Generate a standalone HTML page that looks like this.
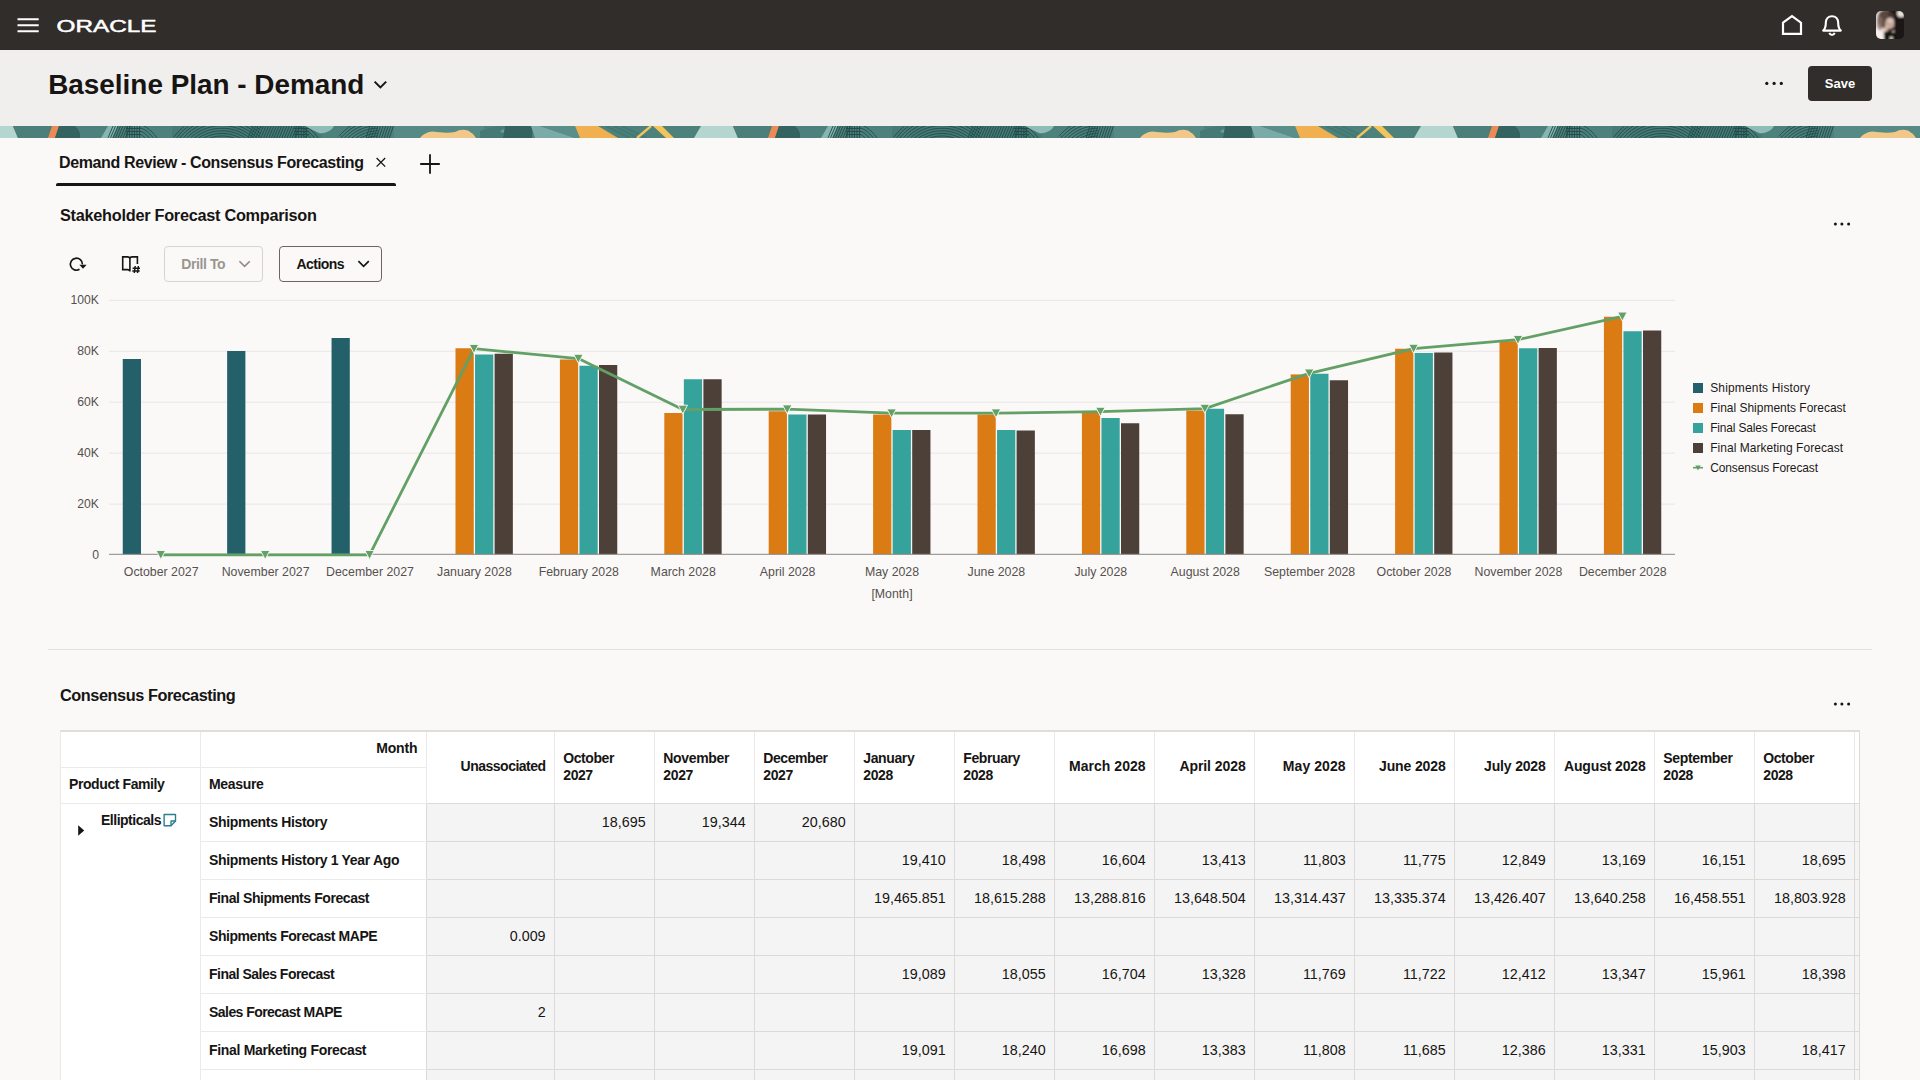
<!DOCTYPE html>
<html lang="en"><head><meta charset="utf-8"><title>Baseline Plan - Demand</title>
<style>
html,body{margin:0;padding:0}
body{width:1920px;height:1080px;overflow:hidden;position:relative;background:#fbf9f8;font-family:"Liberation Sans", Arial, sans-serif;color:#161513}
.abs{position:absolute}
.vl{position:absolute;width:1px}
.hl{position:absolute;height:1px}
.th{position:absolute;font-weight:700;font-size:14px;line-height:17px;white-space:nowrap;color:#161513}
.td{position:absolute;font-size:14.3px;line-height:17px;text-align:right;white-space:nowrap;color:#161513}
.btn{position:absolute;box-sizing:border-box;border-radius:4px;height:36px;top:246px}
</style></head><body>
<!-- top header -->
<div class="abs" style="left:0;top:0;width:1920px;height:50px;background:#312d2a">
<svg class="abs" style="left:17px;top:17px" width="23" height="16" viewBox="0 0 23 16"><path d="M0.5,2.3H21.7M0.5,8.3H21.7M0.5,14.2H21.7" stroke="#fff" stroke-width="1.9"/></svg>
<svg class="abs" style="left:54px;top:14px" width="106" height="24" viewBox="0 0 106 24"><text x="2.6" y="18.3" font-family='&quot;Liberation Sans&quot;, Arial, sans-serif' font-size="17.3" fill="#fff" stroke="#fff" stroke-width="0.5" textLength="100" lengthAdjust="spacingAndGlyphs">ORACLE</text></svg>
<svg class="abs" style="left:1780px;top:13px" width="24" height="24" viewBox="0 0 24 24"><path d="M3,9.7 L12,3.1 L21,9.7 V20.9 H3 Z" fill="none" stroke="#fff" stroke-width="2.2" stroke-linejoin="miter"/></svg>
<svg class="abs" style="left:1820px;top:13px" width="24" height="24" viewBox="0 0 24 24"><path d="M3.2,17.6 H20.8 C18.6,15.6 18.2,14 18.2,10 C18.2,5.8 15.6,3.2 12,3.2 C8.4,3.2 5.8,5.8 5.8,10 C5.8,14 5.4,15.6 3.2,17.6 Z" fill="none" stroke="#fff" stroke-width="2.1" stroke-linejoin="round"/><path d="M9.3,19.9 C9.9,21.5 10.9,22 12,22 C13.1,22 14.1,21.5 14.7,19.9" fill="none" stroke="#fff" stroke-width="2" stroke-linecap="butt"/></svg>
<svg class="abs" style="left:1876px;top:11px" width="28" height="28" viewBox="0 0 28 28"><defs><clipPath id="av"><rect x="0" y="0" width="28" height="28" rx="5"/></clipPath><filter id="bl" x="-20%" y="-20%" width="140%" height="140%"><feGaussianBlur stdDeviation="0.9"/></filter></defs><g clip-path="url(#av)"><rect width="28" height="28" fill="#1e1614"/><g filter="url(#bl)"><rect x="-2" y="-2" width="14" height="32" fill="#e6d8d3"/><ellipse cx="10" cy="8" rx="8.5" ry="9.5" fill="#4a3631" fill-opacity="0.9"/><ellipse cx="4" cy="12" rx="3" ry="7" fill="#8a736c" fill-opacity="0.75"/><path d="M-2,16 Q2,18 4,20 Q7,21 8.4,22 L8,30 L-2,30Z" fill="#f8efec"/><rect x="18" y="-2" width="12" height="32" fill="#1c1513"/><ellipse cx="25" cy="2.4" rx="4" ry="3.6" fill="#e6e2da"/><ellipse cx="13.8" cy="12.4" rx="4.6" ry="6.2" fill="#c7a89b"/><ellipse cx="14.6" cy="9.5" rx="3" ry="2.6" fill="#d8c2b8"/><ellipse cx="10.4" cy="17.4" rx="1.9" ry="3.6" fill="#d2b0a0"/><path d="M7.8,21.5 Q12,18.6 19,20.5 L22,30 L8,30Z" fill="#181311"/><ellipse cx="17.3" cy="20.4" rx="1.1" ry="1.2" fill="#d9cfc9"/><rect x="13.8" y="25.8" width="3" height="3" fill="#e9e0dc"/></g></g></svg>
</div>
<!-- title bar -->
<div class="abs" style="left:0;top:50px;width:1920px;height:76px;background:#f1efee">
<div class="abs" style="left:48.2px;top:18.6px;font-size:27.9px;font-weight:700;line-height:32px;white-space:nowrap;color:#161513">Baseline Plan - Demand</div>
<svg class="abs" style="left:372px;top:29px" width="17" height="12" viewBox="0 0 17 12"><path d="M2.6,2.6 L8.4,8.4 L14.2,2.6" fill="none" stroke="#161513" stroke-width="2"/></svg>
<svg class="abs" style="left:1762px;top:28px" width="24" height="10" viewBox="0 0 24 10"><circle cx="4.8" cy="5.4" r="1.6" fill="#161513"/><circle cx="12.1" cy="5.4" r="1.6" fill="#161513"/><circle cx="19.3" cy="5.4" r="1.6" fill="#161513"/></svg>
<div class="abs" style="left:1808px;top:16.3px;width:64px;height:35px;border-radius:4px;background:#312d2a;color:#fff;font-weight:700;font-size:13px;line-height:35px;text-align:center">Save</div>
</div>
<!-- decorative strip -->
<svg class="abs" style="left:0;top:126px" width="1920" height="12" viewBox="0 0 1920 12">
<g id="sp">
<rect x="0" y="0" width="720" height="12" fill="#4c817c"/>
<polygon points="0,0 13,0 18,12 0,12" fill="#b5d5d1"/>
<polygon points="13,0 52,0 48,12 18,12" fill="#4a7f7a"/>
<polygon points="52,0 59,0 55,12 48,12" fill="#ee8a55"/>
<path d="M59,0 L75,0 Q81,5 80,12 L55,12 Z" fill="#346360"/>
<polygon points="108,0 118,0 112,12 101,12" fill="#86b6b0"/><rect x="172" y="0" width="150" height="12" fill="#457a75"/>
<g fill="none" stroke="#214b48" stroke-width="0.95" stroke-opacity="0.95"><path d="M113.0,0 L108.0,12M115.5,0 L110.5,12M118.0,0 L113.0,12M120.5,0 L115.5,12M123.0,0 L118.0,12M125.5,0 L120.5,12M128.0,0 L123.0,12M130.5,0 L125.5,12"/><path d="M127.0,0 L127.0,12M129.5,0 L129.5,12M132.0,0 L132.0,12M134.5,0 L134.5,12M137.0,0 L137.0,12M139.5,0 L139.5,12M126.0,2.5 H141.0M126.0,5.5 H141.0M126.0,8.5 H141.0"/><path d="M140.9,12.2 L141.8,12.9M140.5,8.3 L141.6,9.0 L142.7,9.8 L143.7,10.6 L144.7,11.4 L145.7,12.3M140.7,5.1 L142.0,5.8 L143.2,6.5 L144.5,7.3 L145.6,8.2 L146.7,9.2 L147.8,10.2 L148.8,11.3 L149.8,12.4M140.6,1.7 L142.1,2.4 L143.5,3.2 L144.9,4.0 L146.2,4.9 L147.5,5.9 L148.7,7.0 L149.9,8.1 L151.0,9.3 L152.1,10.5 L153.1,11.8M143.4,-0.3 L145.0,0.6 L146.5,1.5 L148.0,2.5 L149.4,3.6 L150.8,4.7 L152.0,6.0 L153.3,7.2 L154.4,8.6 L155.5,10.0 L156.5,11.5 L157.4,13.0"/><path d="M209.1,12.4 L210.9,11.8 L212.7,11.2 L214.5,10.8 L216.4,10.4 L218.2,10.2 L220.1,10.0 L222.0,10.0 L223.9,10.0 L225.8,10.2 L227.6,10.4 L229.5,10.8 L231.3,11.2 L233.1,11.8 L234.9,12.4M202.7,12.6 L204.5,11.6 L206.3,10.7 L208.2,10.0 L210.1,9.3 L212.0,8.7 L214.0,8.2 L216.0,7.9 L218.0,7.6 L220.0,7.5 L222.0,7.4 L224.0,7.5 L226.0,7.6 L228.0,7.9 L230.0,8.2 L232.0,8.7 L233.9,9.3 L235.8,10.0 L237.7,10.7 L239.5,11.6 L241.3,12.6M197.8,12.7 L199.6,11.4 L201.4,10.3 L203.3,9.3 L205.2,8.4 L207.2,7.5 L209.3,6.8 L211.3,6.2 L213.4,5.7 L215.6,5.3 L217.7,5.0 L219.8,4.9 L222.0,4.8 L224.2,4.9 L226.3,5.0 L228.4,5.3 L230.6,5.7 L232.7,6.2 L234.7,6.8 L236.8,7.5 L238.8,8.4 L240.7,9.3 L242.6,10.3 L244.4,11.4 L246.2,12.7M194.4,12.0 L196.3,10.6 L198.1,9.3 L200.1,8.1 L202.1,7.0 L204.2,6.0 L206.3,5.1 L208.5,4.3 L210.7,3.7 L212.9,3.2 L215.1,2.7 L217.4,2.4 L219.7,2.3 L222.0,2.2 L224.3,2.3 L226.6,2.4 L228.9,2.7 L231.1,3.2 L233.3,3.7 L235.5,4.3 L237.7,5.1 L239.8,6.0 L241.9,7.0 L243.9,8.1 L245.9,9.3 L247.7,10.6 L249.6,12.0M191.0,11.5 L192.8,9.9 L194.7,8.5 L196.7,7.1 L198.8,5.8 L200.9,4.7 L203.1,3.6 L205.4,2.7 L207.7,1.9 L210.0,1.2 L212.4,0.6 L214.7,0.2 L217.1,-0.1 L219.6,-0.3 L222.0,-0.4 L224.4,-0.3 L226.9,-0.1 L229.3,0.2 L231.6,0.6 L234.0,1.2 L236.3,1.9 L238.6,2.7 L240.9,3.6 L243.1,4.7 L245.2,5.8 L247.3,7.1 L249.3,8.5 L251.2,9.9 L253.0,11.5M187.4,11.4 L189.2,9.6 L191.2,7.9 L193.2,6.4 L195.3,4.9 L197.5,3.6 L199.8,2.3 L202.1,1.2 L204.4,0.3 L206.9,-0.6M237.1,-0.6 L239.6,0.3 L241.9,1.2 L244.2,2.3 L246.5,3.6 L248.7,4.9 L250.8,6.4 L252.8,7.9 L254.8,9.6 L256.6,11.4M183.7,11.5 L185.5,9.5 L187.5,7.7 L189.5,5.9 L191.7,4.3 L193.9,2.7 L196.2,1.3 L198.6,0.0M245.4,0.0 L247.8,1.3 L250.1,2.7 L252.3,4.3 L254.5,5.9 L256.5,7.7 L258.5,9.5 L260.3,11.5M179.9,11.9 L181.7,9.7 L183.7,7.7 L185.7,5.7 L187.9,3.9 L190.1,2.2 L192.5,0.5 L194.9,-0.9M249.1,-0.9 L251.5,0.5 L253.9,2.2 L256.1,3.9 L258.3,5.7 L260.3,7.7M176.0,12.6 L177.9,10.3 L179.8,8.0 L181.8,5.8 L184.0,3.8 L186.3,1.9 L188.6,0.0M255.4,0.0 L257.7,1.9 L260.0,3.8M173.9,11.1 L175.8,8.6 L177.9,6.3 L180.0,4.0 L182.3,1.9 L184.6,-0.2M259.4,-0.2 L261.7,1.9"/><path d="M253.0,0 L248.0,12M255.6,0 L250.6,12M258.2,0 L253.2,12M260.8,0 L255.8,12M263.4,0 L258.4,12M266.0,0 L261.0,12M268.6,0 L263.6,12M271.2,0 L266.2,12M273.8,0 L268.8,12M276.4,0 L271.4,12M279.0,0 L274.0,12M281.6,0 L276.6,12M284.2,0 L279.2,12M286.8,0 L281.8,12M289.4,0 L284.4,12M292.0,0 L287.0,12M294.6,0 L289.6,12M297.2,0 L292.2,12M299.8,0 L294.8,12"/><path d="M296.0,0 L296.0,12M298.6,0 L298.6,12M301.2,0 L301.2,12M303.8,0 L303.8,12M306.4,0 L306.4,12M294.0,2.5 H309.0M294.0,5.5 H309.0M294.0,8.5 H309.0"/><path d="M300.7,11.4 L301.9,12.2M301.0,8.0 L302.3,8.8 L303.6,9.7 L304.9,10.7 L306.1,11.7 L307.2,12.8M301.0,4.6 L302.5,5.4 L304.0,6.3 L305.4,7.3 L306.8,8.4 L308.1,9.5 L309.3,10.7 L310.5,11.9M300.6,1.1 L302.3,1.9 L304.0,2.8 L305.6,3.8 L307.2,4.9 L308.7,6.0 L310.1,7.2 L311.5,8.5 L312.8,9.9 L314.0,11.3 L315.1,12.8M303.7,-0.7 L305.5,0.2 L307.2,1.3 L308.9,2.4 L310.5,3.7 L312.1,5.0 L313.6,6.4 L315.0,7.9 L316.3,9.5 L317.6,11.1 L318.7,12.8"/><path d="M365.0,12.8 L366.5,12.1 L368.1,11.6 L369.7,11.1 L371.3,10.7 L373.0,10.4 L374.7,10.2 L376.3,10.0 L378.0,10.0M359.2,13.0 L360.7,12.0 L362.3,11.2 L363.9,10.4 L365.6,9.7 L367.3,9.1 L369.0,8.6 L370.8,8.2 L372.6,7.8 L374.4,7.6 L376.2,7.4 L378.0,7.4M356.1,11.9 L357.7,10.8 L359.4,9.8 L361.1,8.9 L362.9,8.0 L364.7,7.3 L366.5,6.6 L368.4,6.1 L370.3,5.6 L372.2,5.3 L374.1,5.0 L376.1,4.9 L378.0,4.8M351.4,12.4 L353.0,11.1 L354.6,9.8 L356.3,8.6 L358.1,7.5 L359.9,6.5 L361.8,5.6 L363.7,4.8 L365.7,4.1 L367.7,3.6 L369.7,3.1 L371.8,2.7 L373.8,2.4 L375.9,2.3 L378.0,2.2M348.0,12.0 L349.6,10.5 L351.3,9.0 L353.1,7.7 L354.9,6.4 L356.8,5.3 L358.8,4.2 L360.8,3.3 L362.8,2.4 L364.9,1.7 L367.0,1.0 L369.2,0.5 L371.4,0.1 L373.6,-0.2 L375.8,-0.3 L378.0,-0.4M344.6,11.9 L346.2,10.2 L347.9,8.6 L349.7,7.0 L351.5,5.6 L353.5,4.3 L355.5,3.0 L357.6,1.9 L359.7,0.9 L361.9,-0.0 L364.1,-0.8M341.0,12.0 L342.6,10.1 L344.3,8.3 L346.1,6.6 L348.0,5.0 L350.0,3.5 L352.1,2.1 L354.2,0.8 L356.4,-0.4M339.0,10.4 L340.7,8.4 L342.5,6.5 L344.4,4.7 L346.4,3.0 L348.5,1.4 L350.7,-0.1"/><path d="M370.0,0 L366.0,12M372.6,0 L368.6,12M375.2,0 L371.2,12M377.8,0 L373.8,12M380.4,0 L376.4,12M383.0,0 L379.0,12M385.6,0 L381.6,12M388.2,0 L384.2,12M390.8,0 L386.8,12M393.4,0 L389.4,12"/></g>
<path d="M305,0 L334,0 Q331,6.5 320,7.5 Q314,5 305,0Z" fill="#8fbcb6"/><rect x="394" y="0" width="90" height="12" fill="#568a85"/>
<path d="M420,12 Q424,6.5 432,5.5 Q446,7.5 455,6 Q461,2.5 468,4.5 Q473,7 476,12Z" fill="#f1c88a"/>
<path d="M480,5 L498,0 L505,0 L503,12 L480,12Z" fill="#457a75"/>
<path d="M500,6 Q504,1 512,2 L508,8 Z" fill="#6a9d98"/>
<polygon points="505,0 533,0 532,12 503,12" fill="#346360"/>
<polygon points="531,0 540,0 575,12 535,12" fill="#7aaba6"/>
<polygon points="540,0 575,0 580,12 575,12" fill="#5a8e89"/>
<polygon points="575,0 598,0 618,12 580,12" fill="#f0b050"/>
<g stroke="#437873" stroke-width="2"><path d="M606,0 L630,12M614,0 L638,12M622,0 L646,12"/></g>
<path d="M637,12 L651,0" stroke="#f3c45c" stroke-width="2.4" fill="none"/>
<path d="M653,0 L662,0 L674,12 L666,12 Z" fill="#f3c45c"/>
<polygon points="701,0 735,0 738,12 694,12" fill="#b5d5d1"/>
<polygon points="735,0 738,12 720,12 720,0" fill="#b5d5d1"/>
</g>
<use href="#sp" x="720"/><use href="#sp" x="1440"/></svg>
<!-- tabs -->
<div class="abs" style="left:59px;top:152.6px;font-size:16px;letter-spacing:-0.37px;font-weight:700;line-height:19px;white-space:nowrap">Demand Review - Consensus Forecasting</div>
<svg class="abs" style="left:374px;top:155px" width="14" height="14" viewBox="0 0 14 14"><path d="M2.6,3 L11.2,11.6 M11.2,3 L2.6,11.6" stroke="#161513" stroke-width="1.3"/></svg>
<svg class="abs" style="left:418px;top:152px" width="24" height="24" viewBox="0 0 24 24"><path d="M12,2.2V21.8M2.2,12H21.8" stroke="#161513" stroke-width="1.8"/></svg>
<div class="abs" style="left:56.3px;top:183px;width:339.3px;height:3.3px;background:#161513;border-radius:2px 2px 0 0"></div>
<!-- chart section -->
<div class="abs" style="left:60px;top:204.9px;font-size:16.3px;letter-spacing:-0.27px;font-weight:700;line-height:20px;white-space:nowrap">Stakeholder Forecast Comparison</div>
<svg class="abs" style="left:1830px;top:219px" width="24" height="10" viewBox="0 0 24 10"><circle cx="5.4" cy="5" r="1.5" fill="#161513"/><circle cx="11.9" cy="5" r="1.5" fill="#161513"/><circle cx="18.6" cy="5" r="1.5" fill="#161513"/></svg>
<svg class="abs" style="left:60px;top:245px" width="90" height="40" viewBox="60 245 90 40"><path d="M79.5,269.35 A6,6 0 1 1 82.4,264.4" fill="none" stroke="#161513" stroke-width="1.7"/><path d="M79.4,264.7 H86.6 L83,268.7 Z" fill="#161513"/><path d="M129.9,258.6 Q129.6,256.9 127.6,256.9 H122.7 V269.6 H127.6 Q129.6,269.6 129.9,271.4 M129.9,258.6 V271.6 M129.9,258.6 Q130.2,256.9 132.2,256.9 H137.4 V263.9" fill="none" stroke="#161513" stroke-width="1.6" stroke-linejoin="miter"/><path d="M135.2,266 L134.3,273 M138.4,266 L137.5,273 M132.6,268.3 H140 M132.3,270.9 H139.7" stroke="#161513" stroke-width="1.45" fill="none"/></svg>
<div class="btn" style="left:164.2px;width:99px;border:1px solid #d6d3d0"><span class="abs" style="left:16px;top:8.9px;font-size:14px;font-weight:700;letter-spacing:-0.4px;line-height:17px;color:#9a9692;white-space:nowrap">Drill To</span><svg class="abs" style="left:72px;top:11px" width="15" height="12" viewBox="0 0 15 12"><path d="M2.4,3.2 L7.6,8.4 L12.8,3.2" fill="none" stroke="#8f8b87" stroke-width="1.6"/></svg></div>
<div class="btn" style="left:279.2px;width:102.5px;border:1px solid #6b6661"><span class="abs" style="left:16.3px;top:8.9px;font-size:14px;font-weight:700;line-height:17px;white-space:nowrap;letter-spacing:-0.55px">Actions</span><svg class="abs" style="left:76px;top:11px" width="15" height="12" viewBox="0 0 15 12"><path d="M2.4,3.2 L7.6,8.4 L12.8,3.2" fill="none" stroke="#161513" stroke-width="1.7"/></svg></div>
<svg id="chart" width="1920" height="360" viewBox="0 280 1920 360" style="position:absolute;left:0;top:280px" font-family='&quot;Liberation Sans&quot;, Arial, sans-serif'>
<text x="99" y="559.05" text-anchor="end" font-size="12.2" fill="#55514e">0</text>
<line x1="109" x2="1675" y1="504.10" y2="504.10" stroke="#e8e6e4" stroke-width="1"/>
<text x="99" y="508.10" text-anchor="end" font-size="12.2" fill="#55514e">20K</text>
<line x1="109" x2="1675" y1="453.15" y2="453.15" stroke="#e8e6e4" stroke-width="1"/>
<text x="99" y="457.15" text-anchor="end" font-size="12.2" fill="#55514e">40K</text>
<line x1="109" x2="1675" y1="402.20" y2="402.20" stroke="#e8e6e4" stroke-width="1"/>
<text x="99" y="406.20" text-anchor="end" font-size="12.2" fill="#55514e">60K</text>
<line x1="109" x2="1675" y1="351.25" y2="351.25" stroke="#e8e6e4" stroke-width="1"/>
<text x="99" y="355.25" text-anchor="end" font-size="12.2" fill="#55514e">80K</text>
<line x1="109" x2="1675" y1="300.30" y2="300.30" stroke="#e8e6e4" stroke-width="1"/>
<text x="99" y="304.30" text-anchor="end" font-size="12.2" fill="#55514e">100K</text>
<rect x="122.75" y="359.00" width="18.25" height="195.30" fill="#23606a"/>
<rect x="227.15" y="351.00" width="18.25" height="203.30" fill="#23606a"/>
<rect x="331.55" y="338.00" width="18.25" height="216.30" fill="#23606a"/>
<rect x="455.50" y="348.25" width="18.25" height="206.05" fill="#db7b14"/>
<rect x="475.05" y="354.50" width="18.25" height="199.80" fill="#35a29c"/>
<rect x="494.60" y="353.75" width="18.25" height="200.55" fill="#4c4038"/>
<rect x="559.90" y="359.50" width="18.25" height="194.80" fill="#db7b14"/>
<rect x="579.45" y="365.75" width="18.25" height="188.55" fill="#35a29c"/>
<rect x="599.00" y="365.00" width="18.25" height="189.30" fill="#4c4038"/>
<rect x="664.30" y="413.00" width="18.25" height="141.30" fill="#db7b14"/>
<rect x="683.85" y="379.25" width="18.25" height="175.05" fill="#35a29c"/>
<rect x="703.40" y="379.25" width="18.25" height="175.05" fill="#4c4038"/>
<rect x="768.70" y="411.25" width="18.25" height="143.05" fill="#db7b14"/>
<rect x="788.25" y="414.50" width="18.25" height="139.80" fill="#35a29c"/>
<rect x="807.80" y="414.50" width="18.25" height="139.80" fill="#4c4038"/>
<rect x="873.10" y="414.50" width="18.25" height="139.80" fill="#db7b14"/>
<rect x="892.65" y="430.00" width="18.25" height="124.30" fill="#35a29c"/>
<rect x="912.20" y="430.00" width="18.25" height="124.30" fill="#4c4038"/>
<rect x="977.50" y="414.50" width="18.25" height="139.80" fill="#db7b14"/>
<rect x="997.05" y="430.00" width="18.25" height="124.30" fill="#35a29c"/>
<rect x="1016.60" y="430.50" width="18.25" height="123.80" fill="#4c4038"/>
<rect x="1081.90" y="413.00" width="18.25" height="141.30" fill="#db7b14"/>
<rect x="1101.45" y="418.00" width="18.25" height="136.30" fill="#35a29c"/>
<rect x="1121.00" y="423.25" width="18.25" height="131.05" fill="#4c4038"/>
<rect x="1186.30" y="410.50" width="18.25" height="143.80" fill="#db7b14"/>
<rect x="1205.85" y="408.75" width="18.25" height="145.55" fill="#35a29c"/>
<rect x="1225.40" y="414.25" width="18.25" height="140.05" fill="#4c4038"/>
<rect x="1290.70" y="374.40" width="18.25" height="179.90" fill="#db7b14"/>
<rect x="1310.25" y="373.75" width="18.25" height="180.55" fill="#35a29c"/>
<rect x="1329.80" y="380.25" width="18.25" height="174.05" fill="#4c4038"/>
<rect x="1395.10" y="348.75" width="18.25" height="205.55" fill="#db7b14"/>
<rect x="1414.65" y="353.00" width="18.25" height="201.30" fill="#35a29c"/>
<rect x="1434.20" y="352.50" width="18.25" height="201.80" fill="#4c4038"/>
<rect x="1499.50" y="341.25" width="18.25" height="213.05" fill="#db7b14"/>
<rect x="1519.05" y="348.25" width="18.25" height="206.05" fill="#35a29c"/>
<rect x="1538.60" y="348.00" width="18.25" height="206.30" fill="#4c4038"/>
<rect x="1603.90" y="316.75" width="18.25" height="237.55" fill="#db7b14"/>
<rect x="1623.45" y="331.25" width="18.25" height="223.05" fill="#35a29c"/>
<rect x="1643.00" y="330.50" width="18.25" height="223.80" fill="#4c4038"/>
<line x1="109" x2="1675" y1="554.30" y2="554.30" stroke="#8b8783" stroke-width="1"/>
<polyline points="160.80,554.80 265.20,554.80 369.60,554.80 474.00,348.70 578.40,358.60 682.80,409.50 787.20,409.20 891.60,413.20 996.00,413.20 1100.40,411.60 1204.80,408.60 1309.20,373.30 1413.60,348.60 1518.00,339.70 1622.40,316.40" fill="none" stroke="#62a066" stroke-width="2.8" stroke-linejoin="round"/>
<polygon points="156.10,550.50 165.50,550.50 160.80,559.40" fill="#62a066" stroke="#fbf9f8" stroke-width="1" stroke-opacity="0.9"/>
<polygon points="260.50,550.50 269.90,550.50 265.20,559.40" fill="#62a066" stroke="#fbf9f8" stroke-width="1" stroke-opacity="0.9"/>
<polygon points="364.90,550.50 374.30,550.50 369.60,559.40" fill="#62a066" stroke="#fbf9f8" stroke-width="1" stroke-opacity="0.9"/>
<polygon points="469.30,344.40 478.70,344.40 474.00,353.30" fill="#62a066" stroke="#fbf9f8" stroke-width="1" stroke-opacity="0.9"/>
<polygon points="573.70,354.30 583.10,354.30 578.40,363.20" fill="#62a066" stroke="#fbf9f8" stroke-width="1" stroke-opacity="0.9"/>
<polygon points="678.10,405.20 687.50,405.20 682.80,414.10" fill="#62a066" stroke="#fbf9f8" stroke-width="1" stroke-opacity="0.9"/>
<polygon points="782.50,404.90 791.90,404.90 787.20,413.80" fill="#62a066" stroke="#fbf9f8" stroke-width="1" stroke-opacity="0.9"/>
<polygon points="886.90,408.90 896.30,408.90 891.60,417.80" fill="#62a066" stroke="#fbf9f8" stroke-width="1" stroke-opacity="0.9"/>
<polygon points="991.30,408.90 1000.70,408.90 996.00,417.80" fill="#62a066" stroke="#fbf9f8" stroke-width="1" stroke-opacity="0.9"/>
<polygon points="1095.70,407.30 1105.10,407.30 1100.40,416.20" fill="#62a066" stroke="#fbf9f8" stroke-width="1" stroke-opacity="0.9"/>
<polygon points="1200.10,404.30 1209.50,404.30 1204.80,413.20" fill="#62a066" stroke="#fbf9f8" stroke-width="1" stroke-opacity="0.9"/>
<polygon points="1304.50,369.00 1313.90,369.00 1309.20,377.90" fill="#62a066" stroke="#fbf9f8" stroke-width="1" stroke-opacity="0.9"/>
<polygon points="1408.90,344.30 1418.30,344.30 1413.60,353.20" fill="#62a066" stroke="#fbf9f8" stroke-width="1" stroke-opacity="0.9"/>
<polygon points="1513.30,335.40 1522.70,335.40 1518.00,344.30" fill="#62a066" stroke="#fbf9f8" stroke-width="1" stroke-opacity="0.9"/>
<polygon points="1617.70,312.10 1627.10,312.10 1622.40,321.00" fill="#62a066" stroke="#fbf9f8" stroke-width="1" stroke-opacity="0.9"/>
<text x="161.20" y="576.1" text-anchor="middle" font-size="12.35" fill="#55514e">October 2027</text>
<text x="265.60" y="576.1" text-anchor="middle" font-size="12.35" fill="#55514e">November 2027</text>
<text x="370.00" y="576.1" text-anchor="middle" font-size="12.35" fill="#55514e">December 2027</text>
<text x="474.40" y="576.1" text-anchor="middle" font-size="12.35" fill="#55514e">January 2028</text>
<text x="578.80" y="576.1" text-anchor="middle" font-size="12.35" fill="#55514e">February 2028</text>
<text x="683.20" y="576.1" text-anchor="middle" font-size="12.35" fill="#55514e">March 2028</text>
<text x="787.60" y="576.1" text-anchor="middle" font-size="12.35" fill="#55514e">April 2028</text>
<text x="892.00" y="576.1" text-anchor="middle" font-size="12.35" fill="#55514e">May 2028</text>
<text x="996.40" y="576.1" text-anchor="middle" font-size="12.35" fill="#55514e">June 2028</text>
<text x="1100.80" y="576.1" text-anchor="middle" font-size="12.35" fill="#55514e">July 2028</text>
<text x="1205.20" y="576.1" text-anchor="middle" font-size="12.35" fill="#55514e">August 2028</text>
<text x="1309.60" y="576.1" text-anchor="middle" font-size="12.35" fill="#55514e">September 2028</text>
<text x="1414.00" y="576.1" text-anchor="middle" font-size="12.35" fill="#55514e">October 2028</text>
<text x="1518.40" y="576.1" text-anchor="middle" font-size="12.35" fill="#55514e">November 2028</text>
<text x="1622.80" y="576.1" text-anchor="middle" font-size="12.35" fill="#55514e">December 2028</text>
<text x="892" y="597.6" text-anchor="middle" font-size="12.35" fill="#55514e">[Month]</text>
<rect x="1693" y="383.0" width="10" height="10" fill="#23606a"/>
<text x="1710.2" y="392.2" font-size="11.97" fill="#1c1a18" textLength="99.8" lengthAdjust="spacing">Shipments History</text>
<rect x="1693" y="403.0" width="10" height="10" fill="#db7b14"/>
<text x="1710.2" y="412.2" font-size="11.97" fill="#1c1a18" textLength="135.7" lengthAdjust="spacing">Final Shipments Forecast</text>
<rect x="1693" y="423.0" width="10" height="10" fill="#35a29c"/>
<text x="1710.2" y="432.2" font-size="11.97" fill="#1c1a18" textLength="105.7" lengthAdjust="spacing">Final Sales Forecast</text>
<rect x="1693" y="443.0" width="10" height="10" fill="#4c4038"/>
<text x="1710.2" y="452.2" font-size="11.97" fill="#1c1a18" textLength="132.8" lengthAdjust="spacing">Final Marketing Forecast</text>
<line x1="1693" x2="1703" y1="467.7" y2="467.7" stroke="#62a066" stroke-width="1.6"/>
<polygon points="1695.3,465.4 1700.7,465.4 1698,470.4" fill="#62a066"/>
<text x="1710.2" y="472.2" font-size="11.97" fill="#1c1a18" textLength="107.8" lengthAdjust="spacing">Consensus Forecast</text>
</svg>
<div class="abs" style="left:48px;top:649px;width:1824px;height:1px;background:#e3e1df"></div>
<!-- table section -->
<div class="abs" style="left:60px;top:684.8px;font-size:16.3px;letter-spacing:-0.44px;font-weight:700;line-height:20px;white-space:nowrap">Consensus Forecasting</div>
<svg class="abs" style="left:1830px;top:699px" width="24" height="10" viewBox="0 0 24 10"><circle cx="5.4" cy="5" r="1.5" fill="#161513"/><circle cx="11.9" cy="5" r="1.5" fill="#161513"/><circle cx="18.6" cy="5" r="1.5" fill="#161513"/></svg>
<div id="grid" style="position:absolute;left:60px;top:730px;width:1800px;height:350px;overflow:hidden;background:#fff;border-top:2px solid #e0dedc;border-left:1px solid #ebe9e7;box-sizing:border-box">
<div style="position:absolute;left:-61px;top:-732px;width:1920px;height:1080px">
<div style="position:absolute;left:426.7px;top:803.3px;width:1433px;height:280px;background:#f5f4f4"></div>
<div class="vl" style="left:200.0px;top:731.0px;height:349.0px;background:#eceae8"></div>
<div class="vl" style="left:426.0px;top:731.0px;height:72.3px;background:#eceae8"></div>
<div class="vl" style="left:426.0px;top:803.3px;height:276.7px;background:#dcdad9"></div>
<div class="vl" style="left:554.0px;top:731.0px;height:72.3px;background:#eceae8"></div>
<div class="vl" style="left:554.0px;top:803.3px;height:276.7px;background:#dcdad9"></div>
<div class="vl" style="left:654.0px;top:731.0px;height:72.3px;background:#eceae8"></div>
<div class="vl" style="left:654.0px;top:803.3px;height:276.7px;background:#dcdad9"></div>
<div class="vl" style="left:754.0px;top:731.0px;height:72.3px;background:#eceae8"></div>
<div class="vl" style="left:754.0px;top:803.3px;height:276.7px;background:#dcdad9"></div>
<div class="vl" style="left:854.0px;top:731.0px;height:72.3px;background:#eceae8"></div>
<div class="vl" style="left:854.0px;top:803.3px;height:276.7px;background:#dcdad9"></div>
<div class="vl" style="left:954.0px;top:731.0px;height:72.3px;background:#eceae8"></div>
<div class="vl" style="left:954.0px;top:803.3px;height:276.7px;background:#dcdad9"></div>
<div class="vl" style="left:1054.0px;top:731.0px;height:72.3px;background:#eceae8"></div>
<div class="vl" style="left:1054.0px;top:803.3px;height:276.7px;background:#dcdad9"></div>
<div class="vl" style="left:1154.0px;top:731.0px;height:72.3px;background:#eceae8"></div>
<div class="vl" style="left:1154.0px;top:803.3px;height:276.7px;background:#dcdad9"></div>
<div class="vl" style="left:1254.0px;top:731.0px;height:72.3px;background:#eceae8"></div>
<div class="vl" style="left:1254.0px;top:803.3px;height:276.7px;background:#dcdad9"></div>
<div class="vl" style="left:1354.0px;top:731.0px;height:72.3px;background:#eceae8"></div>
<div class="vl" style="left:1354.0px;top:803.3px;height:276.7px;background:#dcdad9"></div>
<div class="vl" style="left:1454.0px;top:731.0px;height:72.3px;background:#eceae8"></div>
<div class="vl" style="left:1454.0px;top:803.3px;height:276.7px;background:#dcdad9"></div>
<div class="vl" style="left:1554.0px;top:731.0px;height:72.3px;background:#eceae8"></div>
<div class="vl" style="left:1554.0px;top:803.3px;height:276.7px;background:#dcdad9"></div>
<div class="vl" style="left:1654.0px;top:731.0px;height:72.3px;background:#eceae8"></div>
<div class="vl" style="left:1654.0px;top:803.3px;height:276.7px;background:#dcdad9"></div>
<div class="vl" style="left:1754.0px;top:731.0px;height:72.3px;background:#eceae8"></div>
<div class="vl" style="left:1754.0px;top:803.3px;height:276.7px;background:#dcdad9"></div>
<div class="vl" style="left:1854.0px;top:731.0px;height:72.3px;background:#eceae8"></div>
<div class="vl" style="left:1854.0px;top:803.3px;height:276.7px;background:#dcdad9"></div>
<div class="vl" style="left:1854.0px;top:731.0px;height:72.3px;background:#eceae8"></div>
<div class="vl" style="left:1854.0px;top:803.3px;height:276.7px;background:#dcdad9"></div>
<div class="vl" style="left:1859.0px;top:731.0px;height:349.0px;background:#dcdad9"></div>
<div class="hl" style="top:767.0px;left:61.0px;width:365.7px;background:#eceae8"></div>
<div class="hl" style="top:803.0px;left:61.0px;width:365.7px;background:#eceae8"></div>
<div class="hl" style="top:803.0px;left:426.7px;width:1433.3px;background:#dcdad9"></div>
<div class="hl" style="top:841.0px;left:200.5px;width:226.2px;background:#eceae8"></div>
<div class="hl" style="top:841.0px;left:426.7px;width:1433.3px;background:#dcdad9"></div>
<div class="hl" style="top:879.0px;left:200.5px;width:226.2px;background:#eceae8"></div>
<div class="hl" style="top:879.0px;left:426.7px;width:1433.3px;background:#dcdad9"></div>
<div class="hl" style="top:917.0px;left:200.5px;width:226.2px;background:#eceae8"></div>
<div class="hl" style="top:917.0px;left:426.7px;width:1433.3px;background:#dcdad9"></div>
<div class="hl" style="top:955.0px;left:200.5px;width:226.2px;background:#eceae8"></div>
<div class="hl" style="top:955.0px;left:426.7px;width:1433.3px;background:#dcdad9"></div>
<div class="hl" style="top:993.0px;left:200.5px;width:226.2px;background:#eceae8"></div>
<div class="hl" style="top:993.0px;left:426.7px;width:1433.3px;background:#dcdad9"></div>
<div class="hl" style="top:1031.0px;left:200.5px;width:226.2px;background:#eceae8"></div>
<div class="hl" style="top:1031.0px;left:426.7px;width:1433.3px;background:#dcdad9"></div>
<div class="hl" style="top:1069.0px;left:200.5px;width:226.2px;background:#eceae8"></div>
<div class="hl" style="top:1069.0px;left:426.7px;width:1433.3px;background:#dcdad9"></div>
<div class="th" style="letter-spacing:-0.197px;left:300px;width:117.3px;top:740.4px;text-align:right">Month</div>
<div class="th" style="letter-spacing:-0.410px;left:69px;top:776.0px">Product Family</div>
<div class="th" style="letter-spacing:-0.316px;left:209px;top:776.0px">Measure</div>
<div class="th" style="letter-spacing:-0.504px;left:426.7px;width:118.9px;top:758.1px;text-align:right">Unassociated</div>
<div class="th" style="letter-spacing:-0.441px;left:563.3px;top:750.2px">October<br>2027</div>
<div class="th" style="letter-spacing:-0.346px;left:663.3px;top:750.2px">November<br>2027</div>
<div class="th" style="letter-spacing:-0.425px;left:763.3px;top:750.2px">December<br>2027</div>
<div class="th" style="letter-spacing:-0.386px;left:863.3px;top:750.2px">January<br>2028</div>
<div class="th" style="letter-spacing:-0.403px;left:963.3px;top:750.2px">February<br>2028</div>
<div class="th" style="letter-spacing:0.022px;left:1054.3px;width:91.3px;top:758.1px;text-align:right">March 2028</div>
<div class="th" style="letter-spacing:-0.074px;left:1154.3px;width:91.3px;top:758.1px;text-align:right">April 2028</div>
<div class="th" style="letter-spacing:0.065px;left:1254.3px;width:91.3px;top:758.1px;text-align:right">May 2028</div>
<div class="th" style="letter-spacing:-0.124px;left:1354.3px;width:91.3px;top:758.1px;text-align:right">June 2028</div>
<div class="th" style="letter-spacing:-0.174px;left:1454.3px;width:91.3px;top:758.1px;text-align:right">July 2028</div>
<div class="th" style="letter-spacing:-0.150px;left:1554.3px;width:91.3px;top:758.1px;text-align:right">August 2028</div>
<div class="th" style="letter-spacing:-0.351px;left:1663.3px;top:750.2px">September<br>2028</div>
<div class="th" style="letter-spacing:-0.441px;left:1763.3px;top:750.2px">October<br>2028</div>
<svg style="position:absolute;left:77px;top:823.7px" width="8" height="13" viewBox="0 0 8 13"><polygon points="1.2,1.3 7.2,6.5 1.2,11.7" fill="#161513"/></svg>
<div class="th" style="letter-spacing:-0.487px;left:101px;top:811.5px">Ellipticals</div>
<svg style="position:absolute;left:162.7px;top:812.8px" width="14" height="14" viewBox="0 0 15 15"><path d="M1.2,1.6 H13.4 V8.6 L8.6,13.6 H1.2 Z" fill="#fff" stroke="#2b7e8f" stroke-width="1.5" stroke-linejoin="round"/><path d="M13.4,8.6 H8.6 V13.6" fill="none" stroke="#2b7e8f" stroke-width="1.5" stroke-linejoin="round"/></svg>
<div class="th" style="letter-spacing:-0.324px;left:209px;top:814.2px">Shipments History</div>
<div class="td" style="left:554.3px;width:91.3px;top:814.1px">18,695</div>
<div class="td" style="left:654.3px;width:91.3px;top:814.1px">19,344</div>
<div class="td" style="left:754.3px;width:91.3px;top:814.1px">20,680</div>
<div class="th" style="letter-spacing:-0.320px;left:209px;top:852.2px">Shipments History 1 Year Ago</div>
<div class="td" style="left:854.3px;width:91.3px;top:852.1px">19,410</div>
<div class="td" style="left:954.3px;width:91.3px;top:852.1px">18,498</div>
<div class="td" style="left:1054.3px;width:91.3px;top:852.1px">16,604</div>
<div class="td" style="left:1154.3px;width:91.3px;top:852.1px">13,413</div>
<div class="td" style="left:1254.3px;width:91.3px;top:852.1px">11,803</div>
<div class="td" style="left:1354.3px;width:91.3px;top:852.1px">11,775</div>
<div class="td" style="left:1454.3px;width:91.3px;top:852.1px">12,849</div>
<div class="td" style="left:1554.3px;width:91.3px;top:852.1px">13,169</div>
<div class="td" style="left:1654.3px;width:91.3px;top:852.1px">16,151</div>
<div class="td" style="left:1754.3px;width:91.3px;top:852.1px">18,695</div>
<div class="th" style="letter-spacing:-0.428px;left:209px;top:890.0px">Final Shipments Forecast</div>
<div class="td" style="left:854.3px;width:91.3px;top:889.9px">19,465.851</div>
<div class="td" style="left:954.3px;width:91.3px;top:889.9px">18,615.288</div>
<div class="td" style="left:1054.3px;width:91.3px;top:889.9px">13,288.816</div>
<div class="td" style="left:1154.3px;width:91.3px;top:889.9px">13,648.504</div>
<div class="td" style="left:1254.3px;width:91.3px;top:889.9px">13,314.437</div>
<div class="td" style="left:1354.3px;width:91.3px;top:889.9px">13,335.374</div>
<div class="td" style="left:1454.3px;width:91.3px;top:889.9px">13,426.407</div>
<div class="td" style="left:1554.3px;width:91.3px;top:889.9px">13,640.258</div>
<div class="td" style="left:1654.3px;width:91.3px;top:889.9px">16,458.551</div>
<div class="td" style="left:1754.3px;width:91.3px;top:889.9px">18,803.928</div>
<div class="th" style="letter-spacing:-0.433px;left:209px;top:928.0px">Shipments Forecast MAPE</div>
<div class="td" style="left:426.7px;width:118.9px;top:927.8px">0.009</div>
<div class="th" style="letter-spacing:-0.515px;left:209px;top:966.0px">Final Sales Forecast</div>
<div class="td" style="left:854.3px;width:91.3px;top:965.8px">19,089</div>
<div class="td" style="left:954.3px;width:91.3px;top:965.8px">18,055</div>
<div class="td" style="left:1054.3px;width:91.3px;top:965.8px">16,704</div>
<div class="td" style="left:1154.3px;width:91.3px;top:965.8px">13,328</div>
<div class="td" style="left:1254.3px;width:91.3px;top:965.8px">11,769</div>
<div class="td" style="left:1354.3px;width:91.3px;top:965.8px">11,722</div>
<div class="td" style="left:1454.3px;width:91.3px;top:965.8px">12,412</div>
<div class="td" style="left:1554.3px;width:91.3px;top:965.8px">13,347</div>
<div class="td" style="left:1654.3px;width:91.3px;top:965.8px">15,961</div>
<div class="td" style="left:1754.3px;width:91.3px;top:965.8px">18,398</div>
<div class="th" style="letter-spacing:-0.546px;left:209px;top:1004.0px">Sales Forecast MAPE</div>
<div class="td" style="left:426.7px;width:118.9px;top:1003.8px">2</div>
<div class="th" style="letter-spacing:-0.322px;left:209px;top:1042.0px">Final Marketing Forecast</div>
<div class="td" style="left:854.3px;width:91.3px;top:1041.8px">19,091</div>
<div class="td" style="left:954.3px;width:91.3px;top:1041.8px">18,240</div>
<div class="td" style="left:1054.3px;width:91.3px;top:1041.8px">16,698</div>
<div class="td" style="left:1154.3px;width:91.3px;top:1041.8px">13,383</div>
<div class="td" style="left:1254.3px;width:91.3px;top:1041.8px">11,808</div>
<div class="td" style="left:1354.3px;width:91.3px;top:1041.8px">11,685</div>
<div class="td" style="left:1454.3px;width:91.3px;top:1041.8px">12,386</div>
<div class="td" style="left:1554.3px;width:91.3px;top:1041.8px">13,331</div>
<div class="td" style="left:1654.3px;width:91.3px;top:1041.8px">15,903</div>
<div class="td" style="left:1754.3px;width:91.3px;top:1041.8px">18,417</div>
</div></div>
</body></html>
